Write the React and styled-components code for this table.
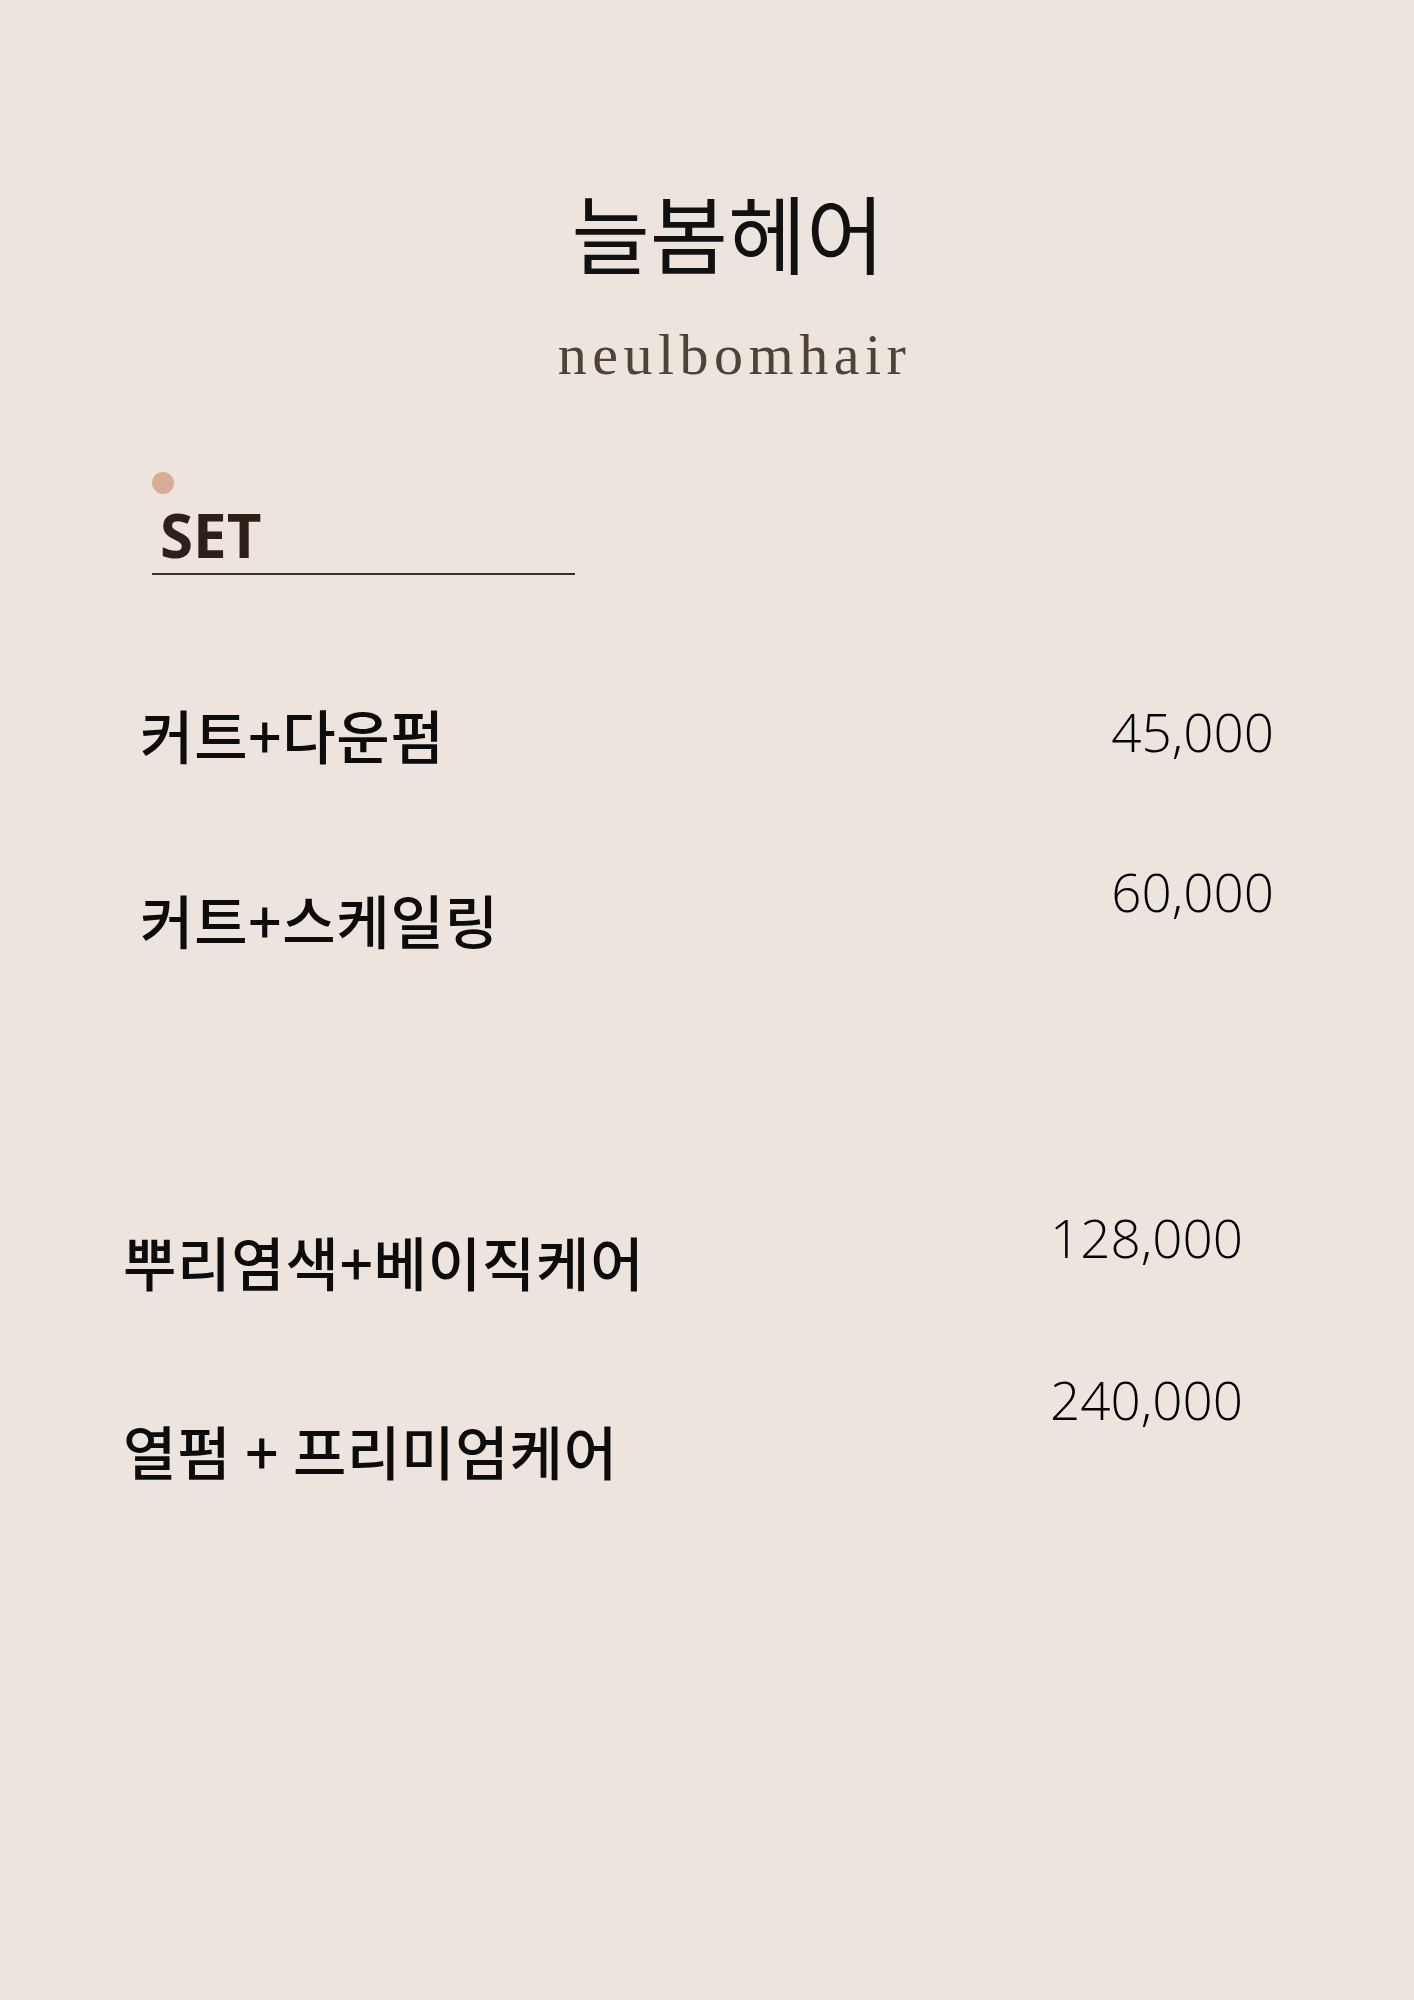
import React from 'react';
import styled, { createGlobalStyle } from 'styled-components';

const GlobalStyle = createGlobalStyle`
  html, body {
    margin: 0;
    padding: 0;
    background: #ede4de;
  }
  body {
    font-family: "Noto Sans CJK KR", "Noto Sans", sans-serif;
    color: #111;
  }
`;

const Page = styled.div`
  width: 1414px;
  min-height: 2000px;
  box-sizing: border-box;
  padding-top: 180px;
  background: #ede4de;
`;

const Header = styled.header`
  display: flex;
  flex-direction: column;
  align-items: center;
  padding-left: 42px;
`;

const Title = styled.h1`
  margin: 0;
  font-family: "Noto Sans CJK KR", sans-serif;
  font-size: 85px;
  font-weight: 400;
  line-height: 1.2;
  color: #111;
`;

const Subtitle = styled.div`
  margin: 44px 0 0 13px;
  font-family: "Liberation Serif", serif;
  font-size: 58px;
  line-height: 1;
  letter-spacing: 5.5px;
  color: #4f4337;
`;

const Section = styled.section`
  margin-top: 88px;
  padding-left: 152px;
`;

const Dot = styled.span`
  display: block;
  width: 22px;
  height: 22px;
  border-radius: 50%;
  background: #d6ae98;
  margin-bottom: 8px;
`;

const SectionTitle = styled.h2`
  margin: 0;
  width: 423px;
  box-sizing: border-box;
  padding: 0 0 5px 8px;
  font-family: "Open Sans", "Noto Sans", sans-serif;
  font-size: 60px;
  font-weight: 700;
  line-height: 1.1;
  color: #2c2018;
  border-bottom: 2px solid #3a2e25;
`;

const Group = styled.div`
  display: flex;
  justify-content: space-between;
  align-items: flex-start;
  padding: 0 ${(p) => p.$right}px 0 ${(p) => p.$left}px;
  margin-top: ${(p) => p.$top}px;
`;

const Column = styled.div`
  display: flex;
  flex-direction: column;
  gap: ${(p) => p.$gap}px;
  padding-top: ${(p) => p.$offset || 0}px;
`;

const ItemName = styled.div`
  font-family: "Noto Sans CJK KR", sans-serif;
  font-size: 58px;
  font-weight: 500;
  line-height: 1;
  letter-spacing: 0.8px;
  color: #0c0c0c;
`;

const Price = styled.div`
  font-family: "Open Sans", "Noto Sans", sans-serif;
  font-size: 53px;
  font-weight: 300;
  line-height: 1;
  text-align: right;
  color: #000;
`;

const groups = [
  {
    left: 140,
    right: 140,
    top: 130,
    nameGap: 127,
    nameOffset: 0,
    priceGap: 107,
    items: [
      { name: '커트+다운펌', price: '45,000' },
      { name: '커트+스케일링', price: '60,000' },
    ],
  },
  {
    left: 123,
    right: 171,
    top: 263,
    nameGap: 131,
    nameOffset: 21,
    priceGap: 109,
    items: [
      { name: '뿌리염색+베이직케어', price: '128,000' },
      { name: '열펌 + 프리미엄케어', price: '240,000' },
    ],
  },
];

export default function App() {
  return (
    <>
      <GlobalStyle />
      <Page>
        <Header>
          <Title>늘봄헤어</Title>
          <Subtitle>neulbomhair</Subtitle>
        </Header>
        <Section>
          <Dot />
          <SectionTitle>SET</SectionTitle>
        </Section>
        {groups.map((group, i) => (
          <Group key={i} $left={group.left} $right={group.right} $top={group.top}>
            <Column $gap={group.nameGap} $offset={group.nameOffset}>
              {group.items.map((item) => (
                <ItemName key={item.name}>{item.name}</ItemName>
              ))}
            </Column>
            <Column $gap={group.priceGap}>
              {group.items.map((item) => (
                <Price key={item.price}>{item.price}</Price>
              ))}
            </Column>
          </Group>
        ))}
      </Page>
    </>
  );
}
